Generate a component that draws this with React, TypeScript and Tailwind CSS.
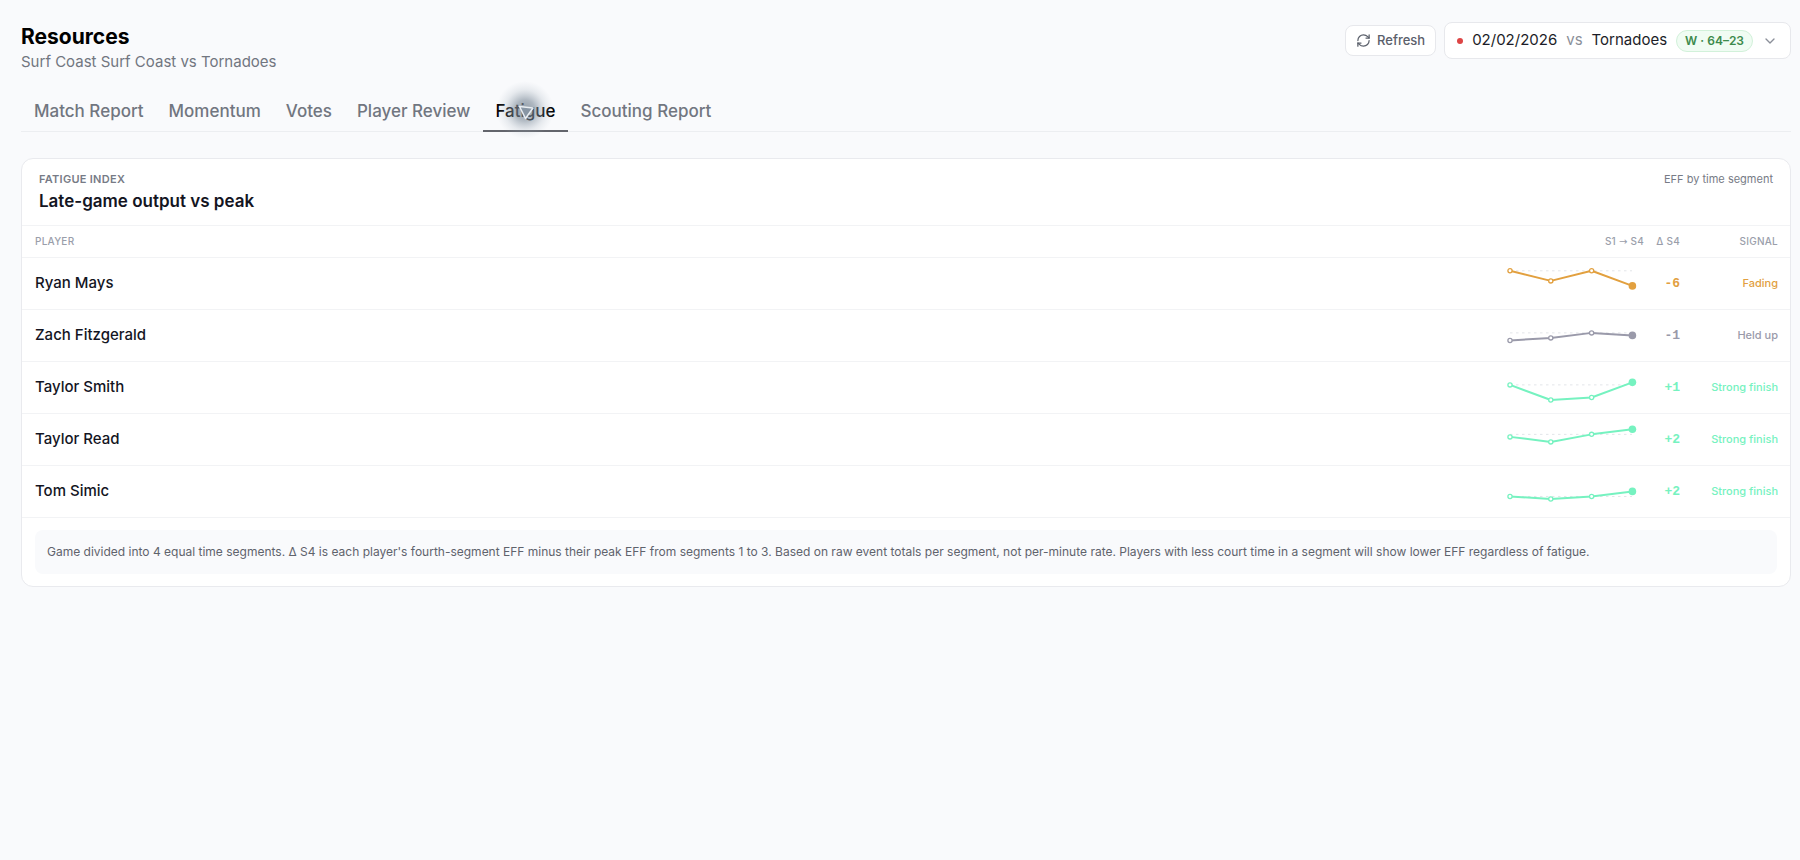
import React from "react";
import { ChevronDown, RefreshCw } from "lucide-react";

type Signal = "Fading" | "Held up" | "Strong finish";

interface PlayerRow {
  name: string;
  segments: number[];
  signal: Signal;
}

const tabs = ["Match Report", "Momentum", "Votes", "Player Review", "Fatigue", "Scouting Report"];

const players: PlayerRow[] = [
  { name: "Ryan Mays", segments: [10, 6, 10, 4], signal: "Fading" },
  { name: "Zach Fitzgerald", segments: [3, 4, 6, 5], signal: "Held up" },
  { name: "Taylor Smith", segments: [6, 0, 1, 7], signal: "Strong finish" },
  { name: "Taylor Read", segments: [6, 4, 7, 9], signal: "Strong finish" },
  { name: "Tom Simic", segments: [3, 2, 3, 5], signal: "Strong finish" },
];

const signalColor: Record<Signal, string> = {
  Fading: "text-[#e2a03f]",
  "Held up": "text-[#9a9aaa]",
  "Strong finish": "text-[#76f2c0]",
};

function delta(segments: number[]): string {
  const value = segments[3] - Math.max(...segments.slice(0, 3));
  return value > 0 ? `+${value}` : `${value}`;
}

function Sparkline({ segments }: { segments: number[] }) {
  const points = segments.map((v, i) => ({ x: 12 + i * 40.8, y: 30 - v * 2.52 }));
  const peak = 30 - Math.max(...segments.slice(0, 3)) * 2.52;
  const last = points[3];
  return (
    <svg width="146" height="36" viewBox="0 0 146 36" className="ml-auto block" aria-hidden="true">
      <line x1="12" x2="134" y1={peak} y2={peak} stroke="#e3e5e9" strokeWidth="1" strokeDasharray="2.5 3.5" />
      <polyline
        points={points.map((p) => `${p.x},${p.y}`).join(" ")}
        fill="none"
        stroke="currentColor"
        strokeWidth="2"
        strokeLinecap="round"
        strokeLinejoin="round"
      />
      {points.slice(0, 3).map((p) => (
        <circle key={p.x} cx={p.x} cy={p.y} r="2.1" fill="#fff" stroke="currentColor" strokeWidth="1.3" />
      ))}
      <circle cx={last.x} cy={last.y} r="3.8" fill="currentColor" />
    </svg>
  );
}

function Pointer() {
  return (
    <span aria-hidden="true" className="pointer-events-none absolute top-1/2 left-1/2 size-16 -translate-x-1/2 -translate-y-1/2">
      <svg viewBox="0 0 64 64" className="size-16">
        <defs>
          <radialGradient id="pointer-glow">
            <stop offset="0" stopColor="#74828f" stopOpacity="0.8" />
            <stop offset="0.35" stopColor="#7d8b99" stopOpacity="0.6" />
            <stop offset="0.7" stopColor="#9aa7b4" stopOpacity="0.2" />
            <stop offset="1" stopColor="#b4bec8" stopOpacity="0" />
          </radialGradient>
        </defs>
        <circle cx="32" cy="32" r="29" fill="url(#pointer-glow)" />
        <path d="M26.5 28.5 L40 30 L32.5 40.5 Z" fill="#8896a4" stroke="#e9eef2" strokeWidth="1.5" strokeLinejoin="round" />
      </svg>
    </span>
  );
}

export default function App() {
  return (
    <main className="min-h-screen bg-[#f9fafc] pt-[22px] pr-[9px] pb-8 pl-[21px] font-['Inter',sans-serif] text-[#14151f]">
      <header className="flex items-start justify-between">
        <div>
          <h1 className="text-[21px] leading-[30px] font-bold text-black">Resources</h1>
          <p className="text-[15px] leading-5 text-[#717680]">Surf Coast Surf Coast vs Tornadoes</p>
        </div>
        <div className="flex items-center gap-2">
          <button className="flex h-[31px] items-center gap-1.5 rounded-lg border border-[#e7e8ec] bg-white px-2.5 text-[13px] font-medium text-[#5b606b]">
            <RefreshCw className="size-[15px]" strokeWidth={2} />
            Refresh
          </button>
          <button
            aria-haspopup="listbox"
            className="flex h-[37px] items-center gap-[9px] rounded-lg border border-[#e7e8ec] bg-white px-3 text-[15px] text-[#1c1d28]"
          >
            <span className="size-1.5 rounded-full bg-[#dd4545]" />
            <span>02/02/2026</span>
            <span className="text-[#8b8f99]">vs</span>
            <span>Tornadoes</span>
            <span className="rounded-full border border-[#d2f1da] bg-[#f0fcf3] px-2 text-[12px] leading-5 font-semibold text-[#3d8a4c]">
              W · 64–23
            </span>
            <ChevronDown className="size-4 text-[#8b8f99]" strokeWidth={2} />
          </button>
        </div>
      </header>

      <nav className="mt-[18px] flex gap-px border-b border-[#eceef1] pl-px">
        {tabs.map((tab) => (
          <a
            key={tab}
            href="#"
            aria-current={tab === "Fatigue" ? "page" : undefined}
            className={
              tab === "Fatigue"
                ? "relative -mb-px border-b-2 border-[#63656c] px-3 pt-[9px] pb-[7px] text-[17px] leading-6 font-medium text-black"
                : "-mb-px border-b-2 border-transparent px-3 pt-[9px] pb-[7px] text-[17px] leading-6 font-medium text-[#717680]"
            }
          >
            {tab}
            {tab === "Fatigue" && <Pointer />}
          </a>
        ))}
      </nav>

      <section className="mt-[26px] rounded-xl border border-[#e9eaee] bg-white">
        <div className="flex items-start justify-between px-[17px] pt-3 pb-3">
          <div>
            <p className="text-[11px] leading-4 font-semibold tracking-wide text-[#777b86] uppercase">Fatigue index</p>
            <h2 className="mt-0.5 text-[17px] leading-6 font-semibold">Late-game output vs peak</h2>
          </div>
          <p className="text-[11px] leading-4 text-[#777b86]">EFF by time segment</p>
        </div>
        <table className="w-full table-fixed border-collapse border-t border-[#f2f3f5]">
          <thead>
            <tr className="h-8 border-b border-[#f2f3f5] text-[10px] tracking-wide text-[#9a9eaa] uppercase">
              <th scope="col" className="pl-[13px] text-left font-medium">Player</th>
              <th scope="col" className="w-[180px] text-right font-medium">
                S1 <span className="font-['DejaVu_Sans',sans-serif]">→</span> S4
              </th>
              <th scope="col" className="w-9 text-right font-medium">Δ S4</th>
              <th scope="col" className="w-[110px] pr-3 text-right font-medium">Signal</th>
            </tr>
          </thead>
          <tbody>
            {players.map((player) => (
              <tr key={player.name} className={`h-[52px] border-b border-[#f2f3f5] ${signalColor[player.signal]}`}>
                <td className="pl-[13px] text-[15px] font-medium text-[#14151f]">{player.name}</td>
                <td>
                  <Sparkline segments={player.segments} />
                </td>
                <td className="text-right font-['Liberation_Mono',monospace] text-[13px] font-bold">{delta(player.segments)}</td>
                <td className="pr-3 text-right text-[11px] font-medium">{player.signal}</td>
              </tr>
            ))}
          </tbody>
        </table>
        <p className="mx-[13px] my-3 rounded-lg bg-[#f9fafc] px-3 py-3 text-[12px] leading-5 text-[#5f636c]">
          Game divided into 4 equal time segments. Δ S4 is each player's fourth-segment EFF minus their peak EFF from
          segments 1 to 3. Based on raw event totals per segment, not per-minute rate. Players with less court time in a
          segment will show lower EFF regardless of fatigue.
        </p>
      </section>
    </main>
  );
}
